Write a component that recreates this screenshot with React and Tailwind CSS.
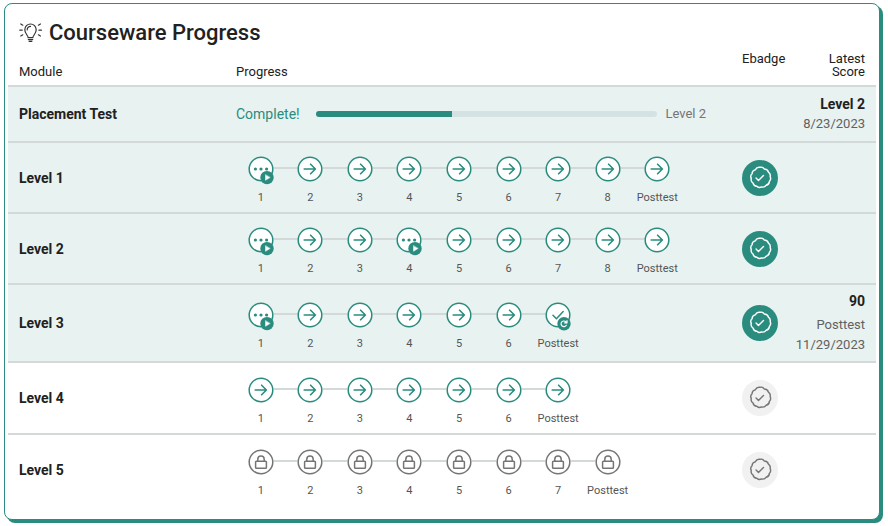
import React from "react";

const levels = [
  { name: "Level 1", steps: 8, inProgress: [1], active: true },
  { name: "Level 2", steps: 8, inProgress: [1, 4], active: true },
  {
    name: "Level 3",
    steps: 6,
    inProgress: [1],
    active: true,
    passed: true,
    score: "90",
    detail: ["Posttest", "11/29/2023"],
    height: "h-[78px]",
  },
  { name: "Level 4", steps: 6, inProgress: [], height: "h-[72px]" },
  { name: "Level 5", steps: 7, inProgress: [], locked: true, height: "h-[72px]" },
];

function BulbIcon() {
  return (
    <svg width="24" height="22" viewBox="0 0 24 22" fill="none" stroke="#333" strokeWidth="1.2" strokeLinecap="round" aria-hidden="true">
      <path d="M9.2 15.6c-.1-2.2-3.4-3.7-3.4-7.9a5.7 5.7 0 0 1 11.4 0c0 4.2-3.3 5.7-3.4 7.9z" />
      <path d="M8.2 7.9a3.3 3.3 0 0 1 3.3-3.5M9.3 17.6h4.4M10.2 19.4h2.6" />
      <path d="M.8 8.2h2.4M20 8.2h2.4M1.8 2l2 1.2M21.4 2l-2 1.2M1.8 14l2-1.2M21.4 14l-2-1.2" />
    </svg>
  );
}

function StepIcon({ kind }) {
  const locked = kind === "lock";
  const color = locked ? "#757575" : "#2a8c7e";
  return (
    <svg className="block" width="26" height="29" viewBox="0 0 26 29" fill="none" stroke={color} strokeWidth="1.5" strokeLinecap="round" strokeLinejoin="round" aria-hidden="true">
      <circle cx="13" cy="13" r="11.8" fill="#fff" />
      {kind === "arrow" && <path d="M7.2 13h11.2M13.6 8.2l4.8 4.8-4.8 4.8" strokeWidth="1.6" />}
      {kind === "lock" && (
        <>
          <rect x="7.6" y="12.2" width="10.8" height="7" rx=".8" />
          <path d="M9.8 12v-1.8a3.2 3.2 0 0 1 6.4 0V12" />
        </>
      )}
      {kind === "dots" && (
        <>
          <g fill={color} stroke="none">
            <circle cx="7.4" cy="13" r="1.6" />
            <circle cx="13" cy="13" r="1.6" />
            <circle cx="18.6" cy="13" r="1.6" />
          </g>
          <circle cx="19" cy="21.6" r="6.7" fill={color} stroke="none" />
          <path d="M17.5 18.9v5.4l4.4-2.7z" fill="#fff" stroke="#fff" strokeWidth=".5" />
        </>
      )}
      {kind === "check" && (
        <>
          <path d="M8 13.2l3.4 3.5 6.8-7.2" />
          <circle cx="19" cy="21.8" r="6.7" fill={color} stroke="none" />
          <path d="M21.3 23.2a2.8 2.8 0 1 1-.3-3.2l.7.8M22 18.7v2.2h-2.4" stroke="#fff" strokeWidth="1.2" />
        </>
      )}
    </svg>
  );
}

function Badge({ earned }) {
  return (
    <span className={`mx-auto flex size-9 items-center justify-center rounded-full ${earned ? "bg-[#2a8c7e] text-white" : "bg-[#f1f1f1] text-[#757575]"}`}>
      <svg width="24" height="24" viewBox="1 1 22 22" fill="none" stroke="currentColor" strokeWidth="1.3" strokeLinecap="round" strokeLinejoin="round" role="img" aria-label={earned ? "Ebadge earned" : "Ebadge not earned"}>
        <path d="M12 2.2c1.6-.4 3 .1 4 1.6 1.900 0 3.200.9 3.700 2.800 1.500 1 2 2.400 1.600 4.100.8 1.600.6 3.100-.7 4.400-.1 1.900-1.100 3.100-2.900 3.500-1.100 1.600-2.500 2.100-4.200 1.600-1.600.8-3.100.6-4.400-.7-1.900-.1-3.100-1.100-3.500-2.900-1.600-1.100-2.100-2.500-1.600-4.200-.8-1.600-.6-3.100.7-4.400.1-1.900 1.100-3.100 2.900-3.500C8.700 2.500 10.300 1.800 12 2.200z" />
        <path d="M8.4 12l2.200 2.200 4.600-4.600" />
      </svg>
    </span>
  );
}

function Steps({ level }) {
  const items = [];
  for (let n = 1; n <= level.steps; n++) {
    const kind = level.locked ? "lock" : level.inProgress.includes(n) ? "dots" : "arrow";
    items.push({ label: String(n), kind });
  }
  items.push({ label: "Posttest", kind: level.locked ? "lock" : level.passed ? "check" : "arrow" });
  return (
    <ol className="grid w-[446px] grid-cols-9 pt-2">
      {items.map((item, i) => (
        <li key={item.label} className="flex flex-col items-center">
          <div className="flex w-full items-start">
            <span className={`mt-[11px] h-0.5 flex-1 ${i > 0 ? "bg-[#d3d9d8]" : ""}`} />
            <StepIcon kind={item.kind} />
            <span className={`mt-[11px] h-0.5 flex-1 ${i < items.length - 1 ? "bg-[#d3d9d8]" : ""}`} />
          </div>
          <span className="mt-1 text-[11px] leading-[18px] text-[#555]">{item.label}</span>
        </li>
      ))}
    </ol>
  );
}

export default function App() {
  return (
    <main className="px-1 pt-[3px] pr-2 pb-2 font-['Roboto',sans-serif] text-[#212121]">
      <section className="rounded-lg border border-[#2a8c7e] bg-white px-[3px] pb-3.5 shadow-[3px_3px_0_#2a8c7e]">
        <h1 className="flex h-12 items-center gap-1.5 pt-2.5 pl-[11px] text-[22px] leading-7 font-medium">
          <BulbIcon />
          Courseware Progress
        </h1>
        <table className="w-full table-fixed border-separate border-spacing-0 text-left">
          <thead className="text-[13px] leading-[13px]">
            <tr className="h-[33px]">
              <th scope="col" className="w-[228px] pb-[7px] pl-[11px] align-bottom font-normal">Module</th>
              <th scope="col" className="pb-[7px] align-bottom font-normal">Progress</th>
              <th scope="col" className="w-[60px] pl-3 align-top font-normal">Ebadge</th>
              <th scope="col" className="w-[86px] pr-[11px] pl-8 text-right align-top font-normal">Latest Score</th>
            </tr>
          </thead>
          <tbody className="[&_td]:border-t-2 [&_td]:border-[#d3d9d8] [&_th]:border-t-2 [&_th]:border-[#d3d9d8]">
            <tr className="h-14 bg-[#e8f2f0]">
              <th scope="row" className="pl-[11px] text-sm font-bold">Placement Test</th>
              <td className="pr-6">
                <div className="flex items-center">
                  <span className="mr-4 text-sm text-[#2a8c7e]">Complete!</span>
                  <div className="h-1.5 flex-1 overflow-hidden rounded-full bg-[#d5e2e4]" role="progressbar" aria-label="Placement Test" aria-valuenow={40}>
                    <div className="h-full w-2/5 bg-[#2a8c7e]" />
                  </div>
                  <span className="ml-2 text-[13px] text-[#757575]">Level 2</span>
                </div>
              </td>
              <td />
              <td className="pr-[11px] text-right">
                <div className="text-sm font-bold">Level 2</div>
                <div className="text-[13px] leading-5 text-[#616161]">8/23/2023</div>
              </td>
            </tr>
            {levels.map((level) => (
              <tr key={level.name} className={`${level.height || "h-[71px]"} ${level.active ? "bg-[#e8f2f0]" : ""}`}>
                <th scope="row" className="pl-[11px] text-sm font-bold">{level.name}</th>
                <td><Steps level={level} /></td>
                <td><Badge earned={level.active} /></td>
                <td className="pr-[11px] text-right">
                  {level.score && (
                    <>
                      <div className="pb-1 text-sm font-bold">{level.score}</div>
                      {level.detail.map((line) => (
                        <div key={line} className="text-[13px] leading-5 text-[#616161]">{line}</div>
                      ))}
                    </>
                  )}
                </td>
              </tr>
            ))}
          </tbody>
        </table>
      </section>
    </main>
  );
}
